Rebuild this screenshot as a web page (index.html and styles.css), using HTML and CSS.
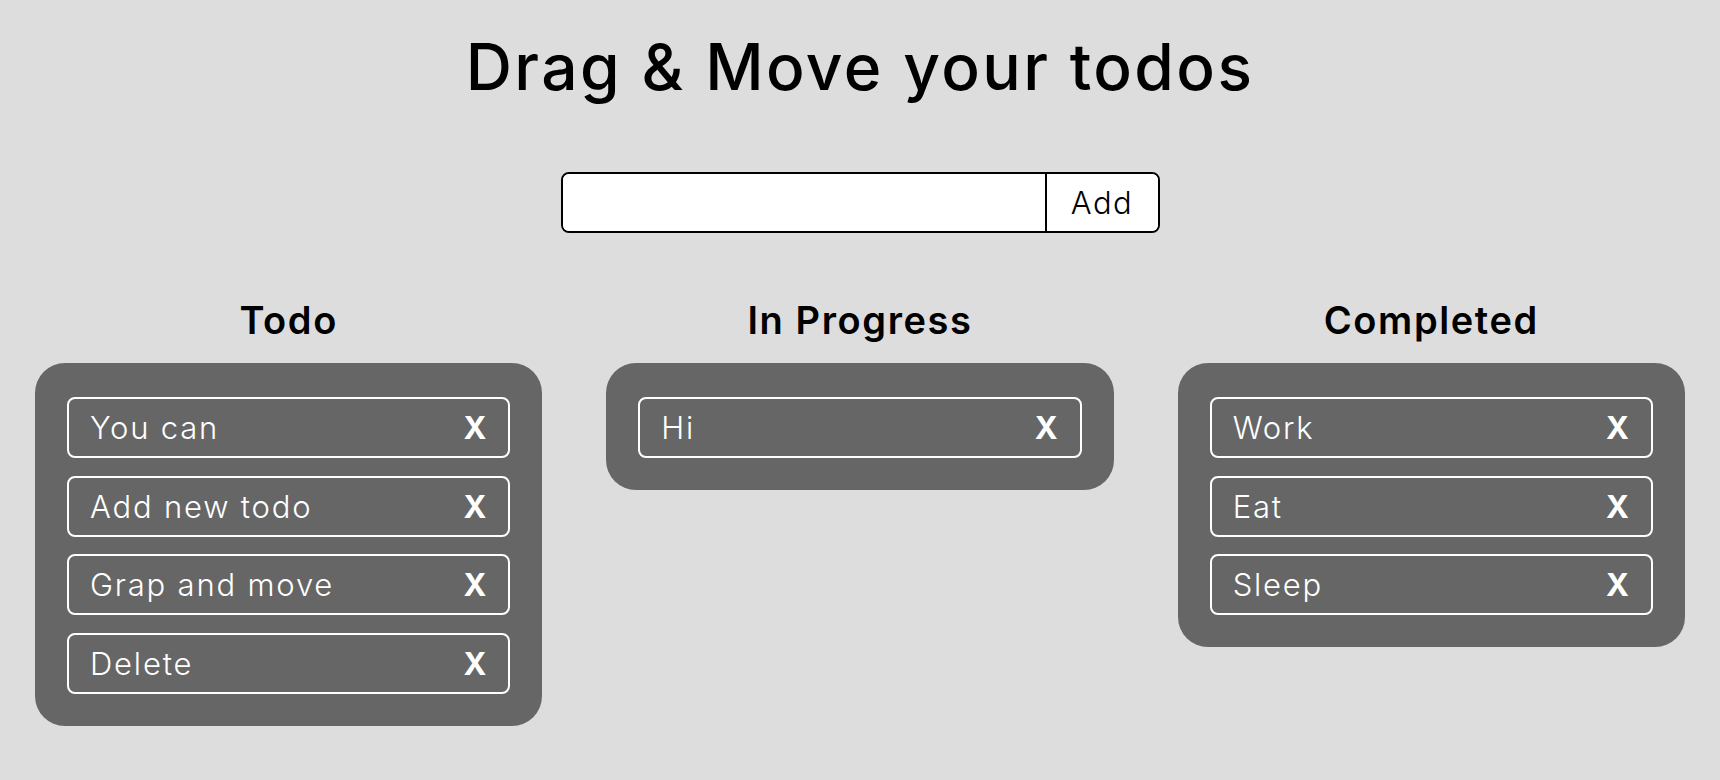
FILE: index.html
```html
<!DOCTYPE html>
<html lang="en">
<head>
<meta charset="utf-8">
<title>Drag &amp; Move your todos</title>
<link rel="stylesheet" href="styles.css">
</head>
<body>
  <h1 class="title">Drag &amp; Move your todos</h1>
  <form class="add-form">
    <div class="add-group">
      <input class="add-input" type="text" aria-label="New todo">
      <button class="add-btn" type="button">Add</button>
    </div>
  </form>
  <main class="board">
    <section class="column">
      <h2 class="column-title">Todo</h2>
      <div class="list">
        <div class="item"><span class="item-text">You can</span><span class="item-del">X</span></div>
        <div class="item"><span class="item-text">Add new todo</span><span class="item-del">X</span></div>
        <div class="item"><span class="item-text">Grap and move</span><span class="item-del">X</span></div>
        <div class="item"><span class="item-text">Delete</span><span class="item-del">X</span></div>
      </div>
    </section>
    <section class="column">
      <h2 class="column-title">In Progress</h2>
      <div class="list">
        <div class="item"><span class="item-text">Hi</span><span class="item-del">X</span></div>
      </div>
    </section>
    <section class="column">
      <h2 class="column-title">Completed</h2>
      <div class="list">
        <div class="item"><span class="item-text">Work</span><span class="item-del">X</span></div>
        <div class="item"><span class="item-text">Eat</span><span class="item-del">X</span></div>
        <div class="item"><span class="item-text">Sleep</span><span class="item-del">X</span></div>
      </div>
    </section>
  </main>
</body>
</html>
```

FILE: styles.css
```css
* { box-sizing: border-box; }

body {
  margin: 0;
  background: #dddddd;
  font-family: Inter, "Noto Sans", "DejaVu Sans", sans-serif;
  color: #000;
}

.title {
  margin: 0;
  padding-top: 28px;
  font-size: 64px;
  line-height: 78px;
  font-weight: 500;
  letter-spacing: 2.4px;
  text-align: center;
}

.add-form {
  display: flex;
  justify-content: center;
  margin-top: 66px;
}

.add-group {
  display: flex;
  width: 599px;
  height: 61px;
  border: 2px solid #000;
  border-radius: 8px;
  background: #fff;
  overflow: hidden;
}

.add-input {
  flex: 1 1 0;
  min-width: 0;
  width: 0;
  border: none;
  outline: none;
  background: #fff;
  font-family: inherit;
  font-size: 30px;
  padding: 0 16px;
}

.add-btn {
  flex: 0 0 113px;
  border: none;
  border-left: 2px solid #000;
  background: #fff;
  font-family: inherit;
  font-size: 31px;
  font-weight: 300;
  letter-spacing: 1.5px;
  color: #000;
  padding: 0;
}

.board {
  display: grid;
  grid-template-columns: repeat(3, 1fr);
  gap: 64px;
  padding: 64px 35px 0;
  align-items: start;
}

.column-title {
  margin: 0 0 20px;
  font-size: 38px;
  line-height: 46px;
  font-weight: 600;
  letter-spacing: 1.6px;
  text-align: center;
}

.list {
  background: #666666;
  border-radius: 30px;
  padding: 34px 32px 32px;
  display: flex;
  flex-direction: column;
  gap: 17.5px;
}

.item {
  display: flex;
  align-items: center;
  justify-content: space-between;
  height: 61px;
  border: 2px solid #fff;
  border-radius: 8px;
  padding: 0 22px 0 21px;
  color: #fff;
}

.item-text {
  font-size: 31px;
  font-weight: 300;
  letter-spacing: 1.8px;
}

.item-del {
  font-size: 31px;
  font-weight: 700;
}
```
